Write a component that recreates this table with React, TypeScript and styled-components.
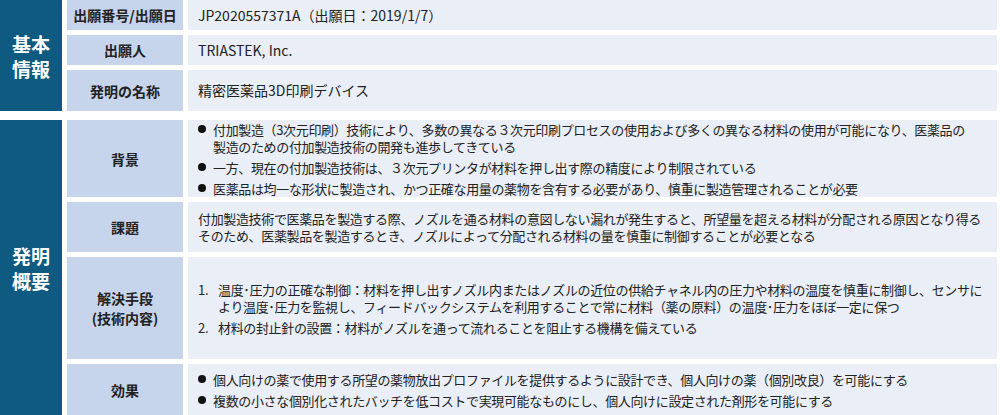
import React from 'react';
import styled, { createGlobalStyle } from 'styled-components';

const GlobalStyle = createGlobalStyle`
  body {
    margin: 0;
    background: #ffffff;
    font-family: "Noto Sans CJK JP", "Noto Sans", sans-serif;
    color: #222222;
  }
`;

const Page = styled.div`
  width: 1000px;
  padding-right: 3px;
  box-sizing: border-box;
  display: flex;
  flex-direction: column;
  gap: 9px;
`;

const Section = styled.section<{ $rows: string }>`
  display: grid;
  grid-template-columns: 62px 116px 1fr;
  grid-template-rows: ${(p) => p.$rows};
  gap: 5px;
`;

const GroupCell = styled.div`
  grid-column: 1;
  grid-row: 1 / -1;
  background: #0f5a80;
  color: #ffffff;
  font-size: 19px;
  font-weight: 700;
  display: flex;
  flex-direction: column;
  align-items: center;
  justify-content: center;
`;

const GroupLine = styled.span`
  display: block;
  line-height: 25px;
`;

const Label = styled.div`
  background: #c6d4ec;
  font-size: 14px;
  font-weight: 700;
  display: flex;
  flex-direction: column;
  align-items: center;
  justify-content: center;
  text-align: center;
`;

const LabelLine = styled.span`
  display: block;
  line-height: 20px;
`;

const Value = styled.div<{ $large?: boolean }>`
  background: #e9eef7;
  font-size: ${(p) => (p.$large ? '14px' : '13px')};
  letter-spacing: ${(p) => (p.$large ? '0' : '-0.35px')};
  line-height: 17px;
  padding: 0 10px;
  display: flex;
  flex-direction: column;
  justify-content: center;
  overflow: hidden;
`;

const Line = styled.span`
  display: block;
  white-space: nowrap;
`;

const List = styled.ul`
  list-style: none;
  margin: 0;
  padding: 0;
  display: flex;
  flex-direction: column;
  gap: 4px;
`;

const Item = styled.li`
  position: relative;
  padding-left: 15px;

  &::before {
    content: '';
    position: absolute;
    left: 0;
    top: 4px;
    width: 8px;
    height: 8px;
    border-radius: 50%;
    background: #111111;
  }
`;

const NumList = styled.ol`
  margin: 0;
  padding: 0;
  list-style: none;
  display: flex;
  flex-direction: column;
  gap: 4px;
`;

const NumItem = styled.li`
  display: flex;
`;

const Num = styled.span`
  flex: 0 0 20px;
`;

const basic = [
  { label: '出願番号/出願日', value: 'JP2020557371A（出願日：2019/1/7）' },
  { label: '出願人', value: 'TRIASTEK, Inc.' },
  { label: '発明の名称', value: '精密医薬品3D印刷デバイス' },
];

// each entry is a list item, split where the source breaks its lines
const background = [
  [
    '付加製造（3次元印刷）技術により、多数の異なる３次元印刷プロセスの使用および多くの異なる材料の使用が可能になり、医薬品の',
    '製造のための付加製造技術の開発も進歩してきている',
  ],
  ['一方、現在の付加製造技術は、３次元プリンタが材料を押し出す際の精度により制限されている'],
  ['医薬品は均一な形状に製造され、かつ正確な用量の薬物を含有する必要があり、慎重に製造管理されることが必要'],
];

const problem = [
  '付加製造技術で医薬品を製造する際、ノズルを通る材料の意図しない漏れが発生すると、所望量を超える材料が分配される原因となり得る',
  'そのため、医薬製品を製造するとき、ノズルによって分配される材料の量を慎重に制御することが必要となる',
];

const solutions = [
  [
    '温度･圧力の正確な制御：材料を押し出すノズル内またはノズルの近位の供給チャネル内の圧力や材料の温度を慎重に制御し、センサに',
    'より温度･圧力を監視し、フィードバックシステムを利用することで常に材料（薬の原料）の温度･圧力をほぼ一定に保つ',
  ],
  ['材料の封止針の設置：材料がノズルを通って流れることを阻止する機構を備えている'],
];

const effects = [
  ['個人向けの薬で使用する所望の薬物放出プロファイルを提供するように設計でき、個人向けの薬（個別改良）を可能にする'],
  ['複数の小さな個別化されたバッチを低コストで実現可能なものにし、個人向けに設定された剤形を可能にする'],
];

function Bullets({ items }: { items: string[][] }) {
  return (
    <List>
      {items.map((lines) => (
        <Item key={lines[0]}>
          {lines.map((l) => (
            <Line key={l}>{l}</Line>
          ))}
        </Item>
      ))}
    </List>
  );
}

export default function App() {
  return (
    <>
      <GlobalStyle />
      <Page>
        <Section $rows="30px 30px 41px">
          <GroupCell>
            <GroupLine>基本</GroupLine>
            <GroupLine>情報</GroupLine>
          </GroupCell>
          {basic.map((row) => (
            <React.Fragment key={row.label}>
              <Label>{row.label}</Label>
              <Value $large>
                <Line>{row.value}</Line>
              </Value>
            </React.Fragment>
          ))}
        </Section>

        <Section $rows="77px 50px 102px 52px">
          <GroupCell>
            <GroupLine>発明</GroupLine>
            <GroupLine>概要</GroupLine>
          </GroupCell>

          <Label>背景</Label>
          <Value>
            <Bullets items={background} />
          </Value>

          <Label>課題</Label>
          <Value>
            {problem.map((l) => (
              <Line key={l}>{l}</Line>
            ))}
          </Value>

          <Label>
            <LabelLine>解決手段</LabelLine>
            <LabelLine>(技術内容)</LabelLine>
          </Label>
          <Value>
            <NumList>
              {solutions.map((lines, i) => (
                <NumItem key={lines[0]}>
                  <Num>{i + 1}.</Num>
                  <span>
                    {lines.map((l) => (
                      <Line key={l}>{l}</Line>
                    ))}
                  </span>
                </NumItem>
              ))}
            </NumList>
          </Value>

          <Label>効果</Label>
          <Value>
            <Bullets items={effects} />
          </Value>
        </Section>
      </Page>
    </>
  );
}
